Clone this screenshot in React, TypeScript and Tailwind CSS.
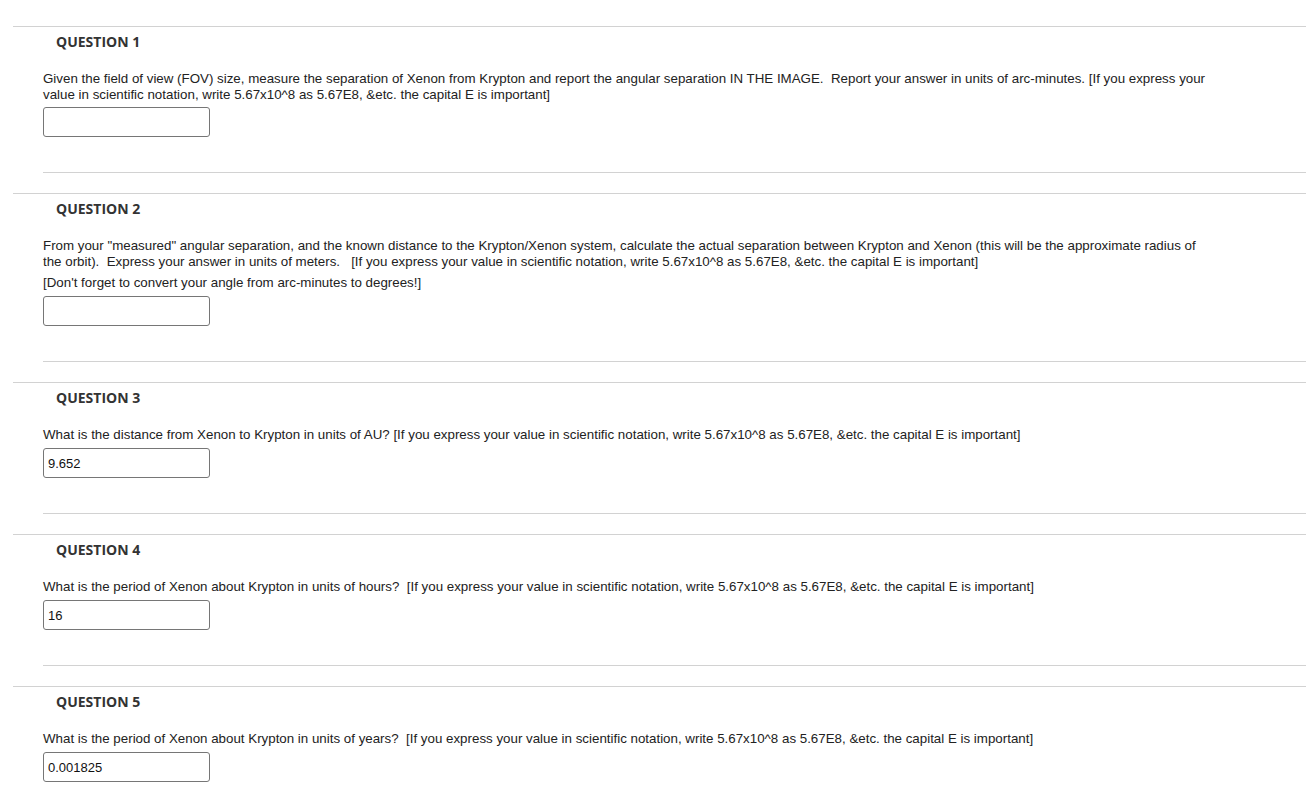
import React from 'react';

type Question = {
  n: number;
  paras: string[];
  value: string;
};

const NB = '\u00a0';

const questions: Question[] = [
  {
    n: 1,
    paras: [
      `Given the field of view (FOV) size, measure the separation of Xenon from Krypton and report the angular separation IN THE IMAGE.${NB} Report your answer in units of arc-minutes. [If you express your value in scientific notation, write 5.67x10^8 as 5.67E8, &etc. the capital E is important]`,
    ],
    value: '',
  },
  {
    n: 2,
    paras: [
      `From your "measured" angular separation, and the known distance to the Krypton/Xenon system, calculate the actual separation between Krypton and Xenon (this will be the approximate radius of the orbit).${NB} Express your answer in units of meters.${NB}${NB} [If you express your value in scientific notation, write 5.67x10^8 as 5.67E8, &etc. the capital E is important]`,
      "[Don't forget to convert your angle from arc-minutes to degrees!]",
    ],
    value: '',
  },
  {
    n: 3,
    paras: [
      'What is the distance from Xenon to Krypton in units of AU? [If you express your value in scientific notation, write 5.67x10^8 as 5.67E8, &etc. the capital E is important]',
    ],
    value: '9.652',
  },
  {
    n: 4,
    paras: [
      `What is the period of Xenon about Krypton in units of hours?${NB} [If you express your value in scientific notation, write 5.67x10^8 as 5.67E8, &etc. the capital E is important]`,
    ],
    value: '16',
  },
  {
    n: 5,
    paras: [
      `What is the period of Xenon about Krypton in units of years?${NB} [If you express your value in scientific notation, write 5.67x10^8 as 5.67E8, &etc. the capital E is important]`,
    ],
    value: '0.001825',
  },
];

const QuestionBlock: React.FC<{ q: Question }> = ({ q }) => {
  return (
    <div className="ml-[13px] border-t border-[#d2d2d2]">
      {/* Heading */}
      <h3 className="ml-[43px] mt-[5px] text-[14px] leading-[20px] font-bold text-[#333] font-['Open_Sans',sans-serif]">
        QUESTION {q.n}
      </h3>

      {/* Body */}
      <div className="ml-[30px] mt-[19px]">
        <div className="max-w-[1168px] text-[13.333px] leading-[16px] text-[#222] font-['Liberation_Sans',Arial,sans-serif]">
          {q.paras.map((p, i) => (
            <p key={i} className={i > 0 ? 'mt-[5px]' : ''}>
              {p}
            </p>
          ))}
        </div>
        <input
          type="text"
          defaultValue={q.value}
          className={`block ${q.n === 1 ? 'mt-[4px]' : 'mt-[5px]'} w-[167px] h-[30px] border border-[#767676] rounded-[3px] px-[4px] text-[13px] text-[#111] bg-white font-['Liberation_Sans',Arial,sans-serif] outline-none`}
        />
        <div className="mt-[35px] h-[21px] border-t border-[#d2d2d2]" />
      </div>
    </div>
  );
};

const App: React.FC = () => {
  return (
    <div className="w-full min-h-screen bg-white pt-[26px]">
      {questions.map((q) => (
        <QuestionBlock key={q.n} q={q} />
      ))}
    </div>
  );
};

export default App;
